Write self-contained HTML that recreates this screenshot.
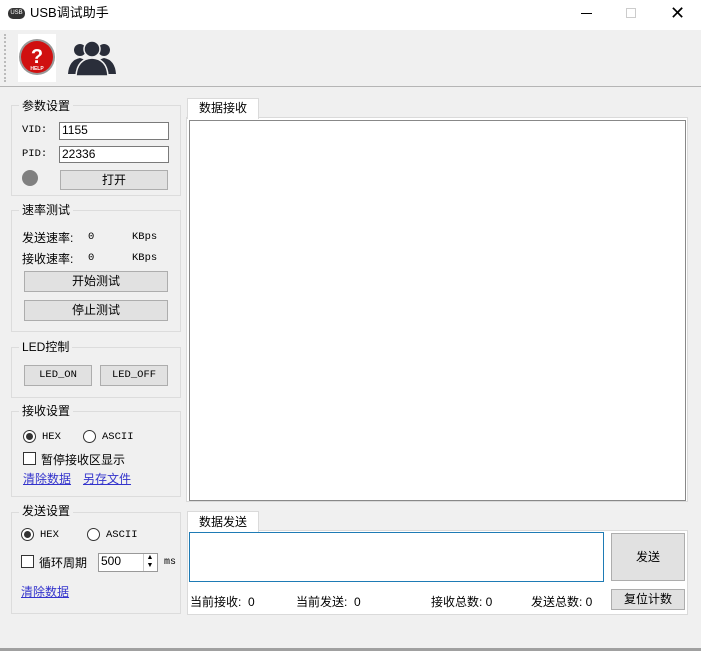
<!DOCTYPE html>
<html><head><meta charset="utf-8"><style>
*{margin:0;padding:0;box-sizing:border-box}
body{width:701px;height:651px;background:#f0f0f0;position:relative;overflow:hidden;font-family:"Liberation Sans","Noto Sans CJK SC",sans-serif;font-size:12px;color:#000}
.a{position:absolute}
.s{font-family:"Liberation Mono","Noto Sans CJK SC",monospace;font-size:10.5px}
.g{position:absolute;border:1px solid #dcdcdc}
.gt{position:absolute;background:#f0f0f0;padding:0 3px;line-height:14px}
.btn{position:absolute;background:#e1e1e1;border:1px solid #adadad;text-align:center}
.in{position:absolute;background:#fff;border:1px solid #7a7a7a;padding-left:2px;line-height:15px}
.rad{position:absolute;width:13px;height:13px;border:1px solid #333;border-radius:50%;background:#fff}
.rad.on::after{content:"";position:absolute;left:2px;top:2px;width:7px;height:7px;border-radius:50%;background:#333}
.chk{position:absolute;width:13px;height:13px;border:1px solid #333;background:#fff}
.lnk{position:absolute;color:#3333cc;text-decoration:underline;line-height:14px}
</style></head><body>
<div class="a" style="left:0;top:0;width:701px;height:30px;background:#fff"></div>
<div class="a" style="left:8px;top:8px;width:17px;height:11px;background:#333;border-radius:5px;color:#fff;font-size:6px;line-height:11px;text-align:center">USB</div>
<div class="a" style="left:30px;top:5px;font-size:13px;line-height:16px">USB调试助手</div>
<div class="a" style="left:581px;top:13px;width:11px;height:1px;background:#000"></div>
<div class="a" style="left:626px;top:8px;width:10px;height:10px;border:1px solid #ccc"></div>
<div class="a" style="left:670px;top:1px;font-size:18px;line-height:24px;font-weight:300">✕</div>
<div class="a" style="left:4px;top:34px;width:2px;height:48px;border-left:2px dotted #bbb"></div>
<div class="a" style="left:18px;top:34px;width:38px;height:48px;background:#fff"></div>
<svg class="a" style="left:18px;top:36px" width="38" height="42"><circle cx="19" cy="21" r="18" fill="#999"/><circle cx="19" cy="21" r="16" fill="#d01010"/><text x="19" y="27" text-anchor="middle" fill="#fff" font-size="20" font-weight="bold" font-family="Liberation Sans">?</text><text x="19" y="34" text-anchor="middle" fill="#fff" font-size="5" font-weight="bold" font-family="Liberation Sans">HELP</text></svg>
<svg class="a" style="left:67px;top:40px" width="50" height="36" fill="#2a2e3a"><circle cx="13" cy="10" r="6"/><circle cx="37" cy="10" r="6"/><path d="M1 34 Q2 20 13 18 Q22 20 24 34Z"/><path d="M26 34 Q28 20 37 18 Q48 20 49 34Z"/><circle cx="25" cy="9" r="8" stroke="#f0f0f0" stroke-width="1.5"/><path d="M9 36 Q10 19 25 18 Q40 19 41 36Z" stroke="#f0f0f0" stroke-width="1.5"/></svg>
<div class="a" style="left:0;top:86px;width:701px;height:1px;background:#b5b5b5"></div>

<div class="g" style="left:11px;top:105px;width:170px;height:91px"></div><div class="gt" style="left:19px;top:99px">参数设置</div>
<div class="a s" style="left:22px;top:124px">VID:</div><div class="in" style="left:59px;top:122px;width:110px;height:18px">1155</div>
<div class="a s" style="left:22px;top:148px">PID:</div><div class="in" style="left:59px;top:146px;width:110px;height:17px">22336</div>
<div class="a" style="left:22px;top:170px;width:16px;height:16px;border-radius:50%;background:#808080"></div>
<div class="btn" style="left:60px;top:170px;width:108px;height:20px;line-height:18px">打开</div>

<div class="g" style="left:11px;top:210px;width:170px;height:122px"></div><div class="gt" style="left:19px;top:203px">速率测试</div>
<div class="a" style="left:22px;top:229px">发送速率:</div><div class="a s" style="left:88px;top:231px">0</div><div class="a s" style="left:132px;top:231px">KBps</div>
<div class="a" style="left:22px;top:250px">接收速率:</div><div class="a s" style="left:88px;top:252px">0</div><div class="a s" style="left:132px;top:252px">KBps</div>
<div class="btn" style="left:24px;top:271px;width:144px;height:21px;line-height:19px">开始测试</div>
<div class="btn" style="left:24px;top:300px;width:144px;height:21px;line-height:19px">停止测试</div>

<div class="g" style="left:11px;top:347px;width:170px;height:51px"></div><div class="gt" style="left:19px;top:340px">LED控制</div>
<div class="btn s" style="left:24px;top:365px;width:68px;height:21px;line-height:19px">LED_ON</div>
<div class="btn s" style="left:100px;top:365px;width:68px;height:21px;line-height:19px">LED_OFF</div>

<div class="g" style="left:11px;top:411px;width:170px;height:86px"></div><div class="gt" style="left:19px;top:404px">接收设置</div>
<div class="rad on" style="left:23px;top:430px"></div><div class="a s" style="left:42px;top:431px">HEX</div>
<div class="rad" style="left:83px;top:430px"></div><div class="a s" style="left:102px;top:431px">ASCII</div>
<div class="chk" style="left:23px;top:452px"></div><div class="a" style="left:41px;top:451px">暂停接收区显示</div>
<div class="lnk" style="left:23px;top:472px">清除数据</div><div class="lnk" style="left:83px;top:472px">另存文件</div>

<div class="g" style="left:11px;top:512px;width:170px;height:102px"></div><div class="gt" style="left:19px;top:504px">发送设置</div>
<div class="rad on" style="left:21px;top:528px"></div><div class="a s" style="left:40px;top:529px">HEX</div>
<div class="rad" style="left:87px;top:528px"></div><div class="a s" style="left:106px;top:529px">ASCII</div>
<div class="chk" style="left:21px;top:555px"></div><div class="a" style="left:39px;top:554px">循环周期</div>
<div class="in" style="left:98px;top:553px;width:60px;height:19px;border-color:#999">500</div>
<div class="a" style="left:143px;top:554px;width:13px;height:17px;border-left:1px solid #ccc;font-size:7px;line-height:8px;text-align:center">▲<br>▼</div>
<div class="a s" style="left:164px;top:557px;font-size:10px">ms</div>
<div class="lnk" style="left:21px;top:585px">清除数据</div>

<div class="a" style="left:186px;top:117px;width:502px;height:385px;background:#fff;border:1px solid #dadada"></div>
<div class="a" style="left:189px;top:120px;width:497px;height:381px;border:1px solid #888;background:#fff"></div>
<div class="a" style="left:187px;top:98px;width:72px;height:21px;background:#fff;border:1px solid #dadada;border-bottom:none;text-align:center;line-height:19px">数据接收</div>

<div class="a" style="left:187px;top:530px;width:501px;height:85px;background:#fff;border:1px solid #dadada"></div>
<div class="a" style="left:187px;top:511px;width:72px;height:21px;background:#fff;border:1px solid #dadada;border-bottom:none;text-align:center;line-height:20px">数据发送</div>
<div class="a" style="left:189px;top:532px;width:415px;height:50px;border:1px solid #1e7bb5;background:#fff"></div>
<div class="btn" style="left:611px;top:533px;width:74px;height:48px;line-height:46px">发送</div>
<div class="a" style="left:190px;top:593px">当前接收: &nbsp;0</div>
<div class="a" style="left:296px;top:593px">当前发送: &nbsp;0</div>
<div class="a" style="left:431px;top:593px">接收总数: 0</div>
<div class="a" style="left:531px;top:593px">发送总数: 0</div>
<div class="btn" style="left:611px;top:589px;width:74px;height:21px;line-height:19px">复位计数</div>
<div class="a" style="left:0;top:648px;width:701px;height:3px;background:#a0a0a0"></div>
</body></html>
